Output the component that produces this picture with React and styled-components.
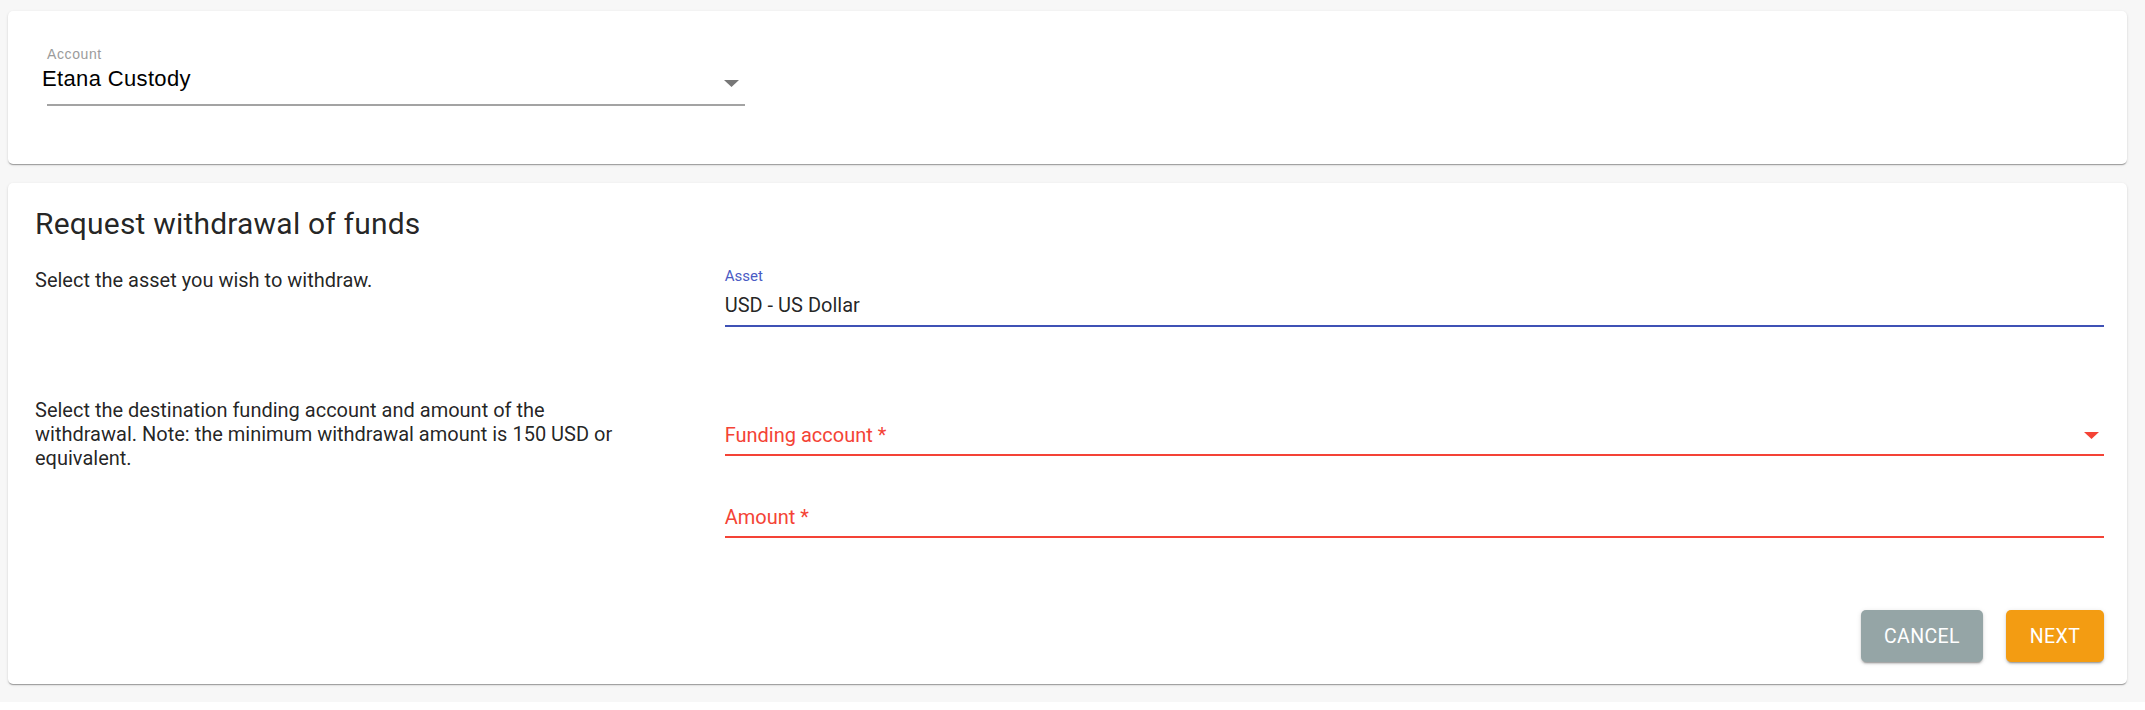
import React from "react";
import styled, { createGlobalStyle } from "styled-components";

const GlobalStyle = createGlobalStyle`
  html, body { margin: 0; padding: 0; background: #ffffff; }
  * { box-sizing: border-box; }
`;

const Page = styled.div`
  height: 702px;
  background: #f7f7f7;
  padding: 11px 18px 0 8px;
  display: flex;
  flex-direction: column;
  gap: 19px;
  font-family: Roboto, "Liberation Sans", sans-serif;
`;

const Card = styled.section`
  background: #ffffff;
  border-radius: 5px;
  box-shadow: 0px 2px 1px -1px rgba(0, 0, 0, 0.2), 0px 1px 1px 0px rgba(0, 0, 0, 0.14),
    0px 1px 3px 0px rgba(0, 0, 0, 0.12);
`;

const AccountCard = styled(Card)`
  padding: 34px 27px 58px 39px;
`;

const FormCard = styled(Card)`
  padding: 21px 23px 22px 27px;
  display: flex;
  flex-direction: column;
`;

/* ---------- Account select (Helvetica-like) ---------- */
const AccountField = styled.div`
  width: 698px;
  display: flex;
  flex-direction: column;
  font-family: "Liberation Sans", Arial, sans-serif;
  border-bottom: 2px solid #a3a3a3;
  padding-bottom: 12px;
`;

const AccountLabel = styled.div`
  font-size: 14px;
  letter-spacing: 0.6px;
  line-height: 18px;
  color: #9b9b9b;
`;

const AccountValueRow = styled.div`
  margin-top: 3px;
  display: flex;
  align-items: center;
  height: 26px;
`;

const AccountValue = styled.div`
  flex: 1;
  margin-left: -5px;
  font-size: 22px;
  letter-spacing: 0.35px;
  line-height: 26px;
  color: #000000;
`;

/* ---------- Form card ---------- */
const Title = styled.h2`
  margin: 0 0 23px 0;
  font-size: 30px;
  font-weight: 400;
  line-height: 40px;
  letter-spacing: 0.2px;
  color: rgba(0, 0, 0, 0.87);
`;

const FormGrid = styled.div`
  display: grid;
  grid-template-columns: 1fr 2fr;
  row-gap: 70px;
`;

const HelpText = styled.p`
  margin: 1px 0 0 0;
  max-width: 605px;
  font-size: 20px;
  line-height: 24px;
  color: rgba(0, 0, 0, 0.87);
`;

const FieldStack = styled.div`
  display: flex;
  flex-direction: column;
  gap: 23px;
`;

const colors = {
  focus: "#3f51b5",
  error: "#f44336",
};

const Field = styled.div`
  display: flex;
  flex-direction: column;
  padding-bottom: ${(p) => (p.$state === "focus" ? 8 : 7)}px;
  border-bottom: 2px solid ${(p) => colors[p.$state]};
`;

const FloatLabel = styled.div`
  height: 18px;
  font-size: 15px;
  line-height: 18px;
  color: ${(p) => (p.$state === "focus" ? "#4a5bc4" : colors[p.$state])};
`;

const ValueRow = styled.div`
  margin-top: 8px;
  height: 24px;
  display: flex;
  align-items: center;
`;

const Value = styled.div`
  flex: 1;
  font-size: 20px;
  line-height: 24px;
  color: ${(p) => (p.$placeholder ? colors.error : "rgba(0, 0, 0, 0.87)")};
`;

const Arrow = styled.svg`
  width: 15px;
  height: 7px;
  flex: none;
  margin-right: ${(p) => p.$right}px;
  margin-top: ${(p) => p.$shift}px;
  fill: ${(p) => p.$color};
`;

const DropArrow = ({ color, right = 5, shift = 0 }) => (
  <Arrow viewBox="0 0 15 7" $color={color} $right={right} $shift={shift}>
    <polygon points="0,0 15,0 7.5,7" />
  </Arrow>
);

const Actions = styled.div`
  margin-top: 72px;
  display: flex;
  justify-content: flex-end;
  gap: 23px;
`;

const Button = styled.button`
  height: 52px;
  min-width: 98px;
  padding: 0 23px;
  border: none;
  border-radius: 5px;
  background: ${(p) => (p.$variant === "primary" ? "#f39c12" : "#95a5a6")};
  color: #ffffff;
  font-family: Roboto, sans-serif;
  font-weight: 400;
  font-size: 19.5px;
  letter-spacing: 0.4px;
  text-transform: uppercase;
  box-shadow: 0px 3px 1px -2px rgba(0, 0, 0, 0.2), 0px 2px 2px 0px rgba(0, 0, 0, 0.14),
    0px 1px 5px 0px rgba(0, 0, 0, 0.12);
  cursor: pointer;
`;

export default function App() {
  return (
    <>
      <GlobalStyle />
      <Page>
        <AccountCard>
          <AccountField>
            <AccountLabel>Account</AccountLabel>
            <AccountValueRow>
              <AccountValue>Etana Custody</AccountValue>
              <DropArrow color="#777777" right={6} shift={8} />
            </AccountValueRow>
          </AccountField>
        </AccountCard>

        <FormCard>
          <Title>Request withdrawal of funds</Title>
          <FormGrid>
            <HelpText>Select the asset you wish to withdraw.</HelpText>
            <Field $state="focus">
              <FloatLabel $state="focus">Asset</FloatLabel>
              <ValueRow>
                <Value>USD - US Dollar</Value>
              </ValueRow>
            </Field>

            <HelpText>
              Select the destination funding account and amount of the withdrawal. Note: the
              minimum withdrawal amount is 150 USD or equivalent.
            </HelpText>
            <FieldStack>
              <Field $state="error">
                <FloatLabel $state="error" />
                <ValueRow>
                  <Value $placeholder>Funding account *</Value>
                  <DropArrow color={colors.error} right={5} />
                </ValueRow>
              </Field>
              <Field $state="error">
                <FloatLabel $state="error" />
                <ValueRow>
                  <Value $placeholder>Amount *</Value>
                </ValueRow>
              </Field>
            </FieldStack>
          </FormGrid>
          <Actions>
            <Button>Cancel</Button>
            <Button $variant="primary">Next</Button>
          </Actions>
        </FormCard>
      </Page>
    </>
  );
}
